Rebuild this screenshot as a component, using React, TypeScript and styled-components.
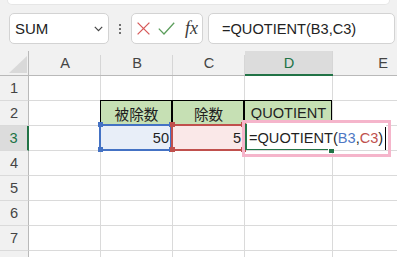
import React from 'react';
import styled, { createGlobalStyle, css } from 'styled-components';

const GlobalStyle = createGlobalStyle`
  html, body { margin: 0; padding: 0; background: #ffffff; }
  body { font-family: "Liberation Sans", "Noto Sans CJK JP", sans-serif; }
  * { box-sizing: border-box; }
`;

const GREEN = '#217346';
const GRID = '#dadada';
const HDR_LINE = '#b9b9b9';

const Page = styled.div`
  width: 397px;
  height: 257px;
  overflow: hidden;
  background: #ffffff;
`;

const Toolbar = styled.div`
  height: 51px;
  background: #f1f1f1;
  display: flex;
  flex-direction: column;
`;

const RibbonEdge = styled.div`
  height: 4px;
  width: 381px;
  margin-left: 8px;
  background: #ffffff;
  border-radius: 0 0 6px 6px;
  box-shadow: 0 0 0 1px #e6e6e6;
`;

const FormulaRow = styled.div`
  margin-top: 9px;
  height: 31px;
  padding-left: 9px;
  display: flex;
  align-items: stretch;
`;

const Box = styled.div`
  background: #ffffff;
  border: 1px solid #d3d3d3;
  border-radius: 5px;
  display: flex;
  align-items: center;
`;

const NameBox = styled(Box)`
  width: 100px;
  padding: 0 5px;
  justify-content: space-between;
  font-size: 15px;
  color: #222;
`;

const Dots = styled.div`
  width: 22px;
  display: flex;
  flex-direction: column;
  align-items: center;
  justify-content: center;
  gap: 2px;
`;

const Dot = styled.span`
  width: 2px;
  height: 2px;
  border-radius: 1px;
  background: #444;
`;

const FxBox = styled(Box)`
  width: 72px;
  padding-left: 5px;
`;

const IconSlot = styled.span<{ $gap: number }>`
  display: flex;
  align-items: center;
  margin-right: ${(p) => p.$gap}px;
`;

const FxLabel = styled.span`
  font-family: "Liberation Serif", serif;
  font-style: italic;
  font-size: 18px;
  color: #3a3a3a;
  line-height: 1;
  margin-top: -1px;
`;

const FormulaInput = styled(Box)`
  flex: 1;
  margin-left: 5px;
  margin-right: 2px;
  padding-left: 13px;
  font-size: 14.6px;
  color: #222;
`;

const Sheet = styled.div`
  display: grid;
  grid-template-columns: 29px 72px 72px 72px 88px 100px;
  grid-auto-rows: 25px;
  font-size: 14.6px;
  color: #1f1f1f;
`;

const CornerCell = styled.div`
  background: #f1f1f1;
  border-right: 1px solid ${HDR_LINE};
  border-bottom: 1px solid ${HDR_LINE};
  display: flex;
  align-items: flex-end;
  justify-content: flex-end;
  padding: 0 1px 2px 0;
`;

const ColHeader = styled.div<{ $active?: boolean }>`
  position: relative;
  background: #f1f1f1;
  border-bottom: 1px solid ${HDR_LINE};
  display: flex;
  align-items: center;
  justify-content: center;
  color: #444;
  font-size: 14.6px;
  &::after {
    content: '';
    position: absolute;
    right: 0;
    top: 4px;
    bottom: 0;
    width: 1px;
    background: #d6d6d6;
  }
  ${(p) =>
    p.$active &&
    css`
      background: #dcdcdc;
      color: ${GREEN};
      border-bottom: 2px solid ${GREEN};
      &::after { top: 0; }
    `}
`;

const RowHeader = styled.div<{ $active?: boolean }>`
  background: #f1f1f1;
  border-right: 1px solid ${HDR_LINE};
  border-bottom: 1px solid ${GRID};
  display: flex;
  align-items: center;
  justify-content: center;
  color: #444;
  font-size: 14.6px;
  ${(p) =>
    p.$active &&
    css`
      background: #dcdcdc;
      color: ${GREEN};
      border-right: 2px solid ${GREEN};
    `}
`;

const Cell = styled.div<{ $fill?: string; $align?: 'left' | 'center' | 'right'; $boxed?: boolean }>`
  position: relative;
  border-right: 1px solid ${GRID};
  border-bottom: 1px solid ${GRID};
  background: ${(p) => p.$fill || 'transparent'};
  display: flex;
  align-items: center;
  justify-content: ${(p) =>
    p.$align === 'right' ? 'flex-end' : p.$align === 'center' ? 'center' : 'flex-start'};
  padding: 0 3px;
  white-space: nowrap;
  ${(p) =>
    p.$boxed &&
    css`
      &::before {
        content: '';
        position: absolute;
        left: -1px;
        top: -1px;
        right: 0;
        bottom: 0;
        border: 1px solid #000;
        pointer-events: none;
      }
    `}
`;

const CellText = styled.span`
  position: relative;
  z-index: 1;
`;

const RangeFrame = styled.div<{ $color: string }>`
  position: absolute;
  left: -2px;
  top: -2px;
  right: 0;
  bottom: -1px;
  border: 2px solid ${(p) => p.$color};
  z-index: 2;
  pointer-events: none;
`;

const Handle = styled.span<{ $color: string; $pos: 'tl' | 'tr' | 'bl' | 'br' }>`
  position: absolute;
  width: 5px;
  height: 5px;
  background: ${(p) => p.$color};
  ${(p) => (p.$pos[0] === 't' ? 'top: -4px;' : 'bottom: -3px;')}
  ${(p) => (p.$pos[1] === 'l' ? 'left: -3px;' : 'right: -4px;')}
`;

const SelectionFrame = styled.div`
  position: absolute;
  left: 0;
  top: -2px;
  right: 0;
  bottom: 0;
  border: 2px solid ${GREEN};
  z-index: 2;
  pointer-events: none;
`;

const FillHandle = styled.span`
  position: absolute;
  right: -4px;
  bottom: -5px;
  width: 5px;
  height: 5px;
  background: ${GREEN};
  box-shadow: -1px -1px 0 0 #ffffff;
`;

const InCellEditor = styled.div`
  position: absolute;
  left: 2px;
  top: -3px;
  width: 139px;
  height: 26px;
  background: #ffffff;
  padding: 4px 0 0 2px;
  line-height: 22px;
  font-size: 14.6px;
  color: #1f1f1f;
  white-space: nowrap;
  z-index: 3;
`;

const Ref = styled.span<{ $color: string }>`
  color: ${(p) => p.$color};
`;

const Caret = styled.span`
  position: absolute;
  left: 138px;
  top: 4px;
  width: 1px;
  height: 23px;
  background: #000;
`;

const Annotation = styled.div`
  position: absolute;
  left: -3px;
  top: -6px;
  width: 149px;
  height: 37px;
  border: 3px solid #f5b5cb;
  z-index: 4;
  pointer-events: none;
`;

const BLUE = '#4472c4';
const RED = '#c0504d';

const columns = ['A', 'B', 'C', 'D', 'E'];
// the eighth row only peeks in at the bottom edge; its number lies below the frame
const rows: Array<{ n: number; label: string }> = [1, 2, 3, 4, 5, 6, 7, 8].map((n) => ({
  n,
  label: n <= 7 ? String(n) : '',
}));

type CellSpec = {
  text?: string;
  fill?: string;
  align?: 'left' | 'center' | 'right';
  boxed?: boolean;
  range?: string;
  editor?: boolean;
};

const data: Record<string, CellSpec> = {
  B2: { text: '被除数', fill: '#c6e0b4', align: 'center', boxed: true },
  C2: { text: '除数', fill: '#c6e0b4', align: 'center', boxed: true },
  D2: { text: 'QUOTIENT', fill: '#c6e0b4', align: 'center', boxed: true },
  B3: { text: '50', fill: '#e8eef8', align: 'right', range: BLUE },
  C3: { text: '5', fill: '#fae8e8', align: 'right', range: RED },
  D3: { editor: true },
};

const Chevron = () => (
  <svg width="9" height="6" viewBox="0 0 9 6">
    <path d="M0.8 0.8 L4.5 4.6 L8.2 0.8" fill="none" stroke="#444" strokeWidth="1.2" />
  </svg>
);

const CancelIcon = () => (
  <svg width="13" height="13" viewBox="0 0 13 13">
    <path d="M0.6 0.6 L12.4 12.4 M12.4 0.6 L0.6 12.4" stroke="#d75a5a" strokeWidth="1.3" fill="none" />
  </svg>
);

const EnterIcon = () => (
  <svg width="17" height="13" viewBox="0 0 17 13">
    <path d="M0.8 6.6 L6 12 L16.2 0.8" stroke="#5c9e5c" strokeWidth="1.3" fill="none" />
  </svg>
);

const SelectAll = () => (
  <svg width="18" height="17" viewBox="0 0 18 17">
    <polygon points="18,0 18,17 0,17" fill="#d9d9d9" />
  </svg>
);

const handles: Array<'tl' | 'tr' | 'bl' | 'br'> = ['tl', 'tr', 'bl', 'br'];

function SheetCell({ id }: { id: string }) {
  const spec = data[id] || {};
  return (
    <Cell $fill={spec.fill} $align={spec.align} $boxed={spec.boxed}>
      {spec.text && <CellText>{spec.text}</CellText>}
      {spec.range && (
        <RangeFrame $color={spec.range}>
          {handles.map((h) => (
            <Handle key={h} $color={spec.range as string} $pos={h} />
          ))}
        </RangeFrame>
      )}
      {spec.editor && (
        <>
          <SelectionFrame>
            <FillHandle />
          </SelectionFrame>
          <InCellEditor>
            =QUOTIENT(<Ref $color="#4f78c4">B3</Ref>,<Ref $color="#c0504d">C3</Ref>)
            <Caret />
          </InCellEditor>
          <Annotation />
        </>
      )}
    </Cell>
  );
}

export default function App() {
  return (
    <Page>
      <GlobalStyle />
      <Toolbar>
        <RibbonEdge />
        <FormulaRow>
          <NameBox>
            <span>SUM</span>
            <Chevron />
          </NameBox>
          <Dots>
            <Dot />
            <Dot />
            <Dot />
          </Dots>
          <FxBox>
            <IconSlot $gap={8}>
              <CancelIcon />
            </IconSlot>
            <IconSlot $gap={10}>
              <EnterIcon />
            </IconSlot>
            <FxLabel>fx</FxLabel>
          </FxBox>
          <FormulaInput>=QUOTIENT(B3,C3)</FormulaInput>
        </FormulaRow>
      </Toolbar>
      <Sheet>
        <CornerCell>
          <SelectAll />
        </CornerCell>
        {columns.map((c) => (
          <ColHeader key={c} $active={c === 'D'}>
            {c}
          </ColHeader>
        ))}
        {rows.map((r) => (
          <React.Fragment key={r.n}>
            <RowHeader $active={r.n === 3}>{r.label}</RowHeader>
            {columns.map((c) => (
              <SheetCell key={c + r.n} id={c + r.n} />
            ))}
          </React.Fragment>
        ))}
      </Sheet>
    </Page>
  );
}
